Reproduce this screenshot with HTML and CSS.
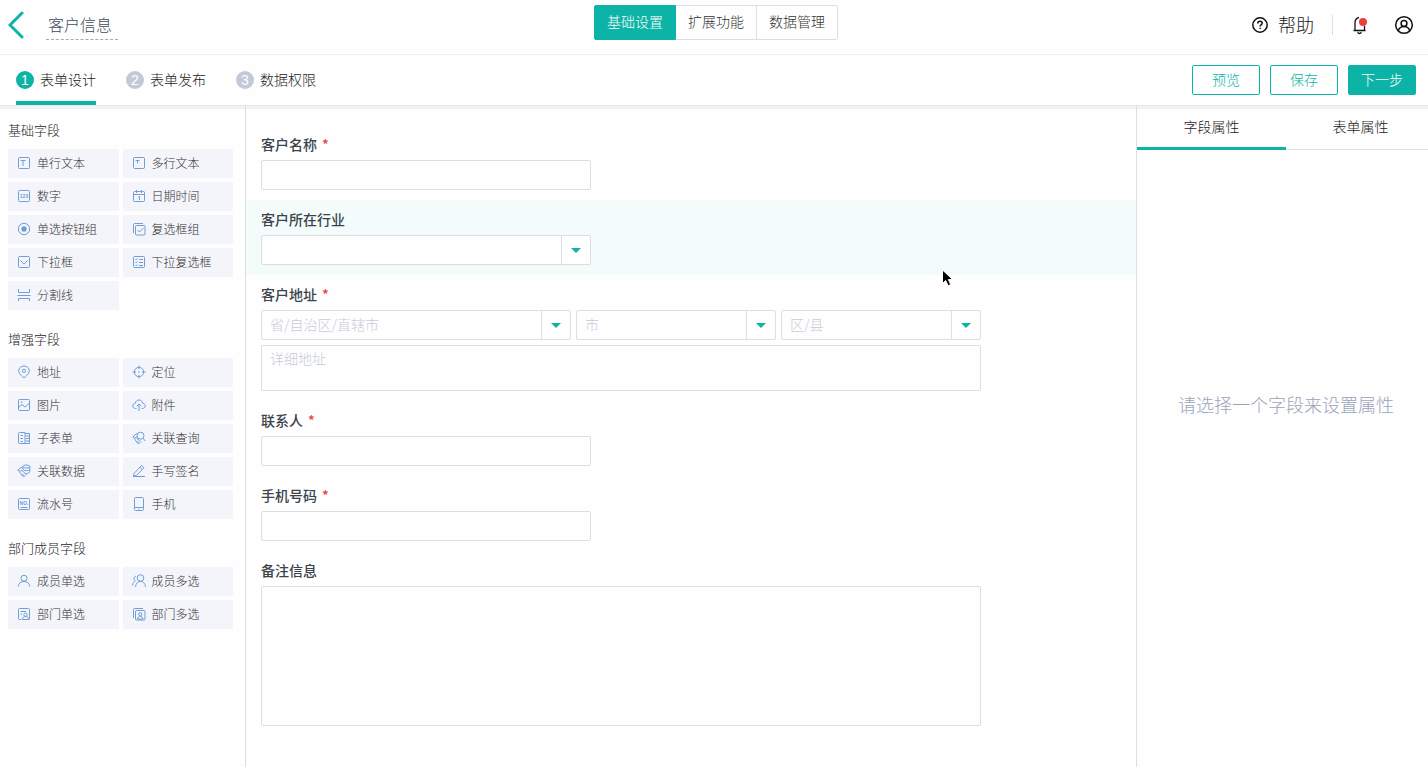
FILE: index.html
```html
<!DOCTYPE html>
<html lang="zh-CN">
<head>
  <meta charset="UTF-8" />
  <title>客户信息</title>
  <meta name="viewport" content="width=device-width, initial-scale=1.0" />
  <link rel="stylesheet" href="styles.css">
</head>
<body>
  <!-- Top bar -->
  <header class="topbar">
    <div class="topbar-left">
      <button class="icon-btn" type="button" aria-label="返回">
        <svg class="back-icon" width="16" height="28" viewBox="0 0 16 28"><path d="M14 2 2 14l12 12"/></svg>
      </button>
      <input class="form-name" type="text" value="客户信息" aria-label="表单名称">
    </div>

    <nav class="segments">
      <button class="segment active" type="button">基础设置</button>
      <button class="segment" type="button">扩展功能</button>
      <button class="segment" type="button">数据管理</button>
    </nav>

    <div class="topbar-right">
      <a class="help" href="#">
        <svg class="line-icon" width="18" height="18" viewBox="0 0 18 18"><circle cx="9" cy="9" r="7.200"/><path d="M6.800 7.400c0-1.400 1-2.100 2.200-2.100s2.200.8 2.200 2c0 1.500-2.100 1.500-2.100 3.100M9.100 11.700v1.400"/></svg>
        <span class="help-text">帮助</span>
      </a>
      <span class="divider"></span>
      <button class="icon-btn" type="button" aria-label="消息">
        <svg class="line-icon bell" width="18" height="20" viewBox="0 0 18 20"><path d="M8 2.500C5.600 3 4 5.200 4 8v7.200M2.500 15.500h12M13.500 11v4.200M6.500 17.300c.8.400 1.200 1.200 2 1.200s1.400-.8 2-1.200"/><circle class="dot" cx="12" cy="7" r="4"/></svg>
      </button>
      <button class="icon-btn" type="button" aria-label="账号">
        <svg class="line-icon" width="20" height="20" viewBox="0 0 20 20"><circle cx="10" cy="10" r="8.300"/><circle cx="10" cy="8.500" r="2.900"/><path d="M4.300 15.600c.9-2.600 3-4 5.700-4s4.800 1.400 5.700 4"/></svg>
      </button>
    </div>
  </header>

  <!-- Steps -->
  <div class="stepbar">
    <nav class="steps">
      <a class="step active" href="#"><span class="step-num">1</span><span class="step-text">表单设计</span></a>
      <a class="step" href="#"><span class="step-num">2</span><span class="step-text">表单发布</span></a>
      <a class="step" href="#"><span class="step-num">3</span><span class="step-text">数据权限</span></a>
    </nav>
    <div class="actions">
      <button class="btn" type="button">预览</button>
      <button class="btn" type="button">保存</button>
      <button class="btn btn-primary" type="button">下一步</button>
    </div>
  </div>

  <div class="workspace">
    <!-- Field palette -->
    <aside class="palette">
      <section class="group">
        <h2 class="group-title">基础字段</h2>
        <div class="widgets">
          <button class="widget" type="button">
            <svg viewBox="0 0 14 14"><rect x="1.500" y="1.500" width="11" height="11" rx="1"/><path d="M3.500 4.500h5M6 4.500v5.500"/></svg>单行文本
          </button>
          <button class="widget" type="button">
            <svg viewBox="0 0 14 14"><rect x="1.500" y="1.500" width="11" height="11" rx="1"/><path d="M3.500 4.500h4M5.500 4.500v3"/></svg>多行文本
          </button>
          <button class="widget" type="button">
            <svg viewBox="0 0 14 14"><rect x="1.500" y="1.500" width="11" height="11" rx="1"/><text x="7" y="9" font-size="5">123</text></svg>数字
          </button>
          <button class="widget" type="button">
            <svg viewBox="0 0 14 14"><rect x="1.500" y="2.500" width="11" height="10" rx="1"/><path d="M1.500 5.500h11M4.500 1v3M9.500 1v3M6.300 8 7.500 7.500v3.500"/></svg>日期时间
          </button>
          <button class="widget" type="button">
            <svg viewBox="0 0 14 14"><circle cx="7" cy="7" r="5.700"/><circle class="fill" cx="7" cy="7" r="2.700"/></svg>单选按钮组
          </button>
          <button class="widget" type="button">
            <svg viewBox="0 0 14 14"><rect x="3.500" y="3.500" width="9.500" height="9.500" rx="1"/><path d="M1.500 11V2.500q0-1 1-1H11M5.500 8l2 2 4-4"/></svg>复选框组
          </button>
          <button class="widget" type="button">
            <svg viewBox="0 0 14 14"><rect x="1.500" y="1.500" width="11" height="11" rx="1"/><path d="M3.500 5.500 7 9l3.500-3.500"/></svg>下拉框
          </button>
          <button class="widget" type="button">
            <svg viewBox="0 0 14 14"><rect x="1.500" y="1.500" width="11" height="11" rx="1"/><path d="M3.300 4l.8.800L5.500 3.500M3.300 7l.8.800L5.500 6.500M3.300 10l.8.800L5.500 9.500M7 4.500h4M7 7.500h4M7 10.500h4"/></svg>下拉复选框
          </button>
          <button class="widget" type="button">
            <svg viewBox="0 0 14 14"><path d="M1.500 1v3.500h11V1M.5 7.500h13M1.500 13v-2.500h11V13"/></svg>分割线
          </button>
        </div>
      </section>

      <section class="group">
        <h2 class="group-title">增强字段</h2>
        <div class="widgets">
          <button class="widget" type="button">
            <svg viewBox="0 0 14 14"><path d="M7 13C4 10.500 1.700 8.200 1.700 5.800 1.700 3 4 1 7 1s5.300 2 5.300 4.800C12.300 8.200 10 10.500 7 13z"/><circle cx="7" cy="5.800" r="1.600"/></svg>地址
          </button>
          <button class="widget" type="button">
            <svg viewBox="0 0 14 14"><circle cx="7" cy="7" r="4.700"/><path d="M7 .5v3.500M7 10v3.500M.5 7H4M10 7h3.500"/><circle class="fill" cx="7" cy="7" r=".8"/></svg>定位
          </button>
          <button class="widget" type="button">
            <svg viewBox="0 0 14 14"><rect x="1.500" y="1.500" width="11" height="11" rx="1"/><path d="M1.500 9.500 5 6.500l3 2.500 4.500-4"/><circle class="fill" cx="4.500" cy="4.300" r=".8"/></svg>图片
          </button>
          <button class="widget" type="button">
            <svg viewBox="0 0 14 14"><path d="M4.500 10.500h-1C1.900 10.500.7 9.400.7 8s1-2.500 2.500-2.600C3.500 3.300 5 2 7 2s3.500 1.300 3.800 3.400c1.500.1 2.500 1.200 2.500 2.600s-1.200 2.500-2.800 2.500h-1M7 13V6M4.800 8.200 7 6l2.200 2.200"/></svg>附件
          </button>
          <button class="widget" type="button">
            <svg viewBox="0 0 14 14"><path d="M8 1.500H2.500q-1 0-1 1v9q0 1 1 1H8zM8 2.500h4.500v10H8M3.500 4.500H6M3.500 7.500H6M3.500 10.500H6M9 5h3.500M9 7.500h3.500M9 10h3.500"/></svg>子表单
          </button>
          <button class="widget" type="button">
            <svg viewBox="0 0 14 14"><circle cx="8.500" cy="4.700" r="3.500"/><path d="m11 7.200 2.300 2.800M5.500 2.700 4 3 .8 6.200l1.400 1 2.600-1M4.500 7l4 3.700M2.300 7.500l3 4.500q1 1 2 .2M5.500 10.500l2 2M8.500 10.500l1 .8"/></svg>关联查询
          </button>
          <button class="widget" type="button">
            <svg viewBox="0 0 14 14"><ellipse cx="9.300" cy="2.500" rx="3.500" ry="1.500"/><path d="M5.800 2.500v2.700c1 2 6 2 7 0V2.500M12.800 5.200V8c-.6 1-2 1.500-3.500 1.500M5.500 4 4 3.500.8 6l1.400 1.200L5 6.500l4.500 4M2.300 7.500l3.200 4.500q1 1 2 .2M5.500 10l2.300 2.500M8.500 10.500l1 .8"/></svg>关联数据
          </button>
          <button class="widget" type="button">
            <svg viewBox="0 0 14 14"><path d="M2 9.500 9.500 1.500 12 3.700 4.500 11.500l-3 .5zM8 3.300l2.300 2.200M1 12.500h12"/></svg>手写签名
          </button>
          <button class="widget" type="button">
            <svg viewBox="0 0 14 14"><rect x="1.500" y="1.500" width="11" height="11" rx="1"/><text x="7" y="8" font-size="5">NO.</text><path d="M3.500 10.500h7"/></svg>流水号
          </button>
          <button class="widget" type="button">
            <svg viewBox="0 0 14 14"><rect x="2.500" y=".5" width="9" height="13" rx="1"/><path d="M2.500 10.500h9M6.500 12h1"/></svg>手机
          </button>
        </div>
      </section>

      <section class="group">
        <h2 class="group-title">部门成员字段</h2>
        <div class="widgets">
          <button class="widget" type="button">
            <svg viewBox="0 0 14 14"><circle cx="7" cy="4.200" r="3"/><path d="M1 12.500C1.600 9.300 4 7.400 7 7.400s5.400 1.900 6 5.100"/></svg>成员单选
          </button>
          <button class="widget" type="button">
            <svg viewBox="0 0 14 14"><circle cx="8.500" cy="4" r="3.300"/><path d="M3.500 12.800c.4-3.500 2.400-5.500 5-5.500s4.600 2 5 5.500M4 2.200C1.600 2.300 1.200 5.500 3.300 6.800 1.800 7.600.8 9 .6 11.500"/></svg>成员多选
          </button>
          <button class="widget" type="button">
            <svg viewBox="0 0 14 14"><path d="M4 12.500H2.500q-1 0-1-1v-9q0-1 1-1h9q1 0 1 1v9q0 1-1 1M3.500 4.500H9M3.500 7H5"/><circle cx="8.500" cy="7.700" r="1.700"/><path d="M5 12.500c.5-4 6.500-4 7 0z"/></svg>部门单选
          </button>
          <button class="widget" type="button">
            <svg viewBox="0 0 14 14"><rect x="3.500" y="3.500" width="9.500" height="9.500" rx="1"/><path d="M1.500 11V2.500q0-1 1-1H11M5.500 12c.4-3.600 5.100-3.600 5.500 0z"/><circle cx="8.300" cy="7.200" r="1.600"/></svg>部门多选
          </button>
        </div>
      </section>
    </aside>

    <!-- Form canvas -->
    <main class="canvas">
      <div class="field">
        <label class="field-label" for="name">客户名称<span class="required">*</span></label>
        <input class="control" id="name" type="text">
      </div>

      <div class="field hovered">
        <label class="field-label" for="industry">客户所在行业</label>
        <div class="select">
          <select id="industry"><option></option></select>
          <span class="arrow"></span>
        </div>
      </div>

      <div class="field">
        <label class="field-label" for="province">客户地址<span class="required">*</span></label>
        <div class="address">
          <div class="select province">
            <select id="province"><option>省/自治区/直辖市</option></select>
            <span class="arrow"></span>
          </div>
          <div class="select">
            <select aria-label="市"><option>市</option></select>
            <span class="arrow"></span>
          </div>
          <div class="select">
            <select aria-label="区/县"><option>区/县</option></select>
            <span class="arrow"></span>
          </div>
          <textarea class="control detail" placeholder="详细地址" aria-label="详细地址"></textarea>
        </div>
      </div>

      <div class="field">
        <label class="field-label" for="contact">联系人<span class="required">*</span></label>
        <input class="control" id="contact" type="text">
      </div>

      <div class="field">
        <label class="field-label" for="phone">手机号码<span class="required">*</span></label>
        <input class="control" id="phone" type="tel">
      </div>

      <div class="field">
        <label class="field-label" for="remark">备注信息</label>
        <textarea class="control remark" id="remark"></textarea>
      </div>
    </main>

    <!-- Properties -->
    <aside class="props">
      <div class="tabs">
        <button class="tab active" type="button">字段属性</button>
        <button class="tab" type="button">表单属性</button>
      </div>
      <p class="empty">请选择一个字段来设置属性</p>
    </aside>
  </div>

  <svg class="cursor" width="14" height="20" viewBox="0 0 14 20"><path d="M1.500 1v13.500l3.200-3 2.400 5.300 2.600-1.200-2.300-5h4.400z"/></svg>
</body>
</html>
```

FILE: styles.css
```css
:root {
  --green: #0db3a6;
  --line: #dcdee0;
  --text: #1c1c1c;
  --icon: #6f9ed8;
}

* {
  box-sizing: border-box;
}

body {
  margin: 0;
  height: 100vh;
  display: flex;
  flex-direction: column;
  overflow: hidden;
  background: #fefefe;
  color: var(--text);
  font-family: "Noto Sans CJK SC", sans-serif;
  font-size: 14px;
  font-weight: 300;
  line-height: 20px;
}

button, input, select, textarea {
  font: inherit;
  color: inherit;
}

button {
  padding: 0;
  border: 0;
  background: none;
  cursor: pointer;
}

a {
  color: inherit;
  text-decoration: none;
}

svg {
  display: block;
  flex: none;
  fill: none;
}

/* Top bar */
.topbar {
  display: grid;
  grid-template-columns: 1fr auto 1fr;
  height: 55px;
  padding: 0 12px 4px 8px;
  align-items: center;
  border-bottom: 1px solid #efefef;
}

.topbar-left {
  display: flex;
  align-items: center;
  gap: 22px;
}

.back-icon {
  stroke: var(--green);
  stroke-width: 3;
  stroke-linecap: round;
}

.form-name {
  width: 72px;
  height: 30px;
  padding: 0 2px 2px;
  border: 0;
  border-bottom: 1px dashed #aaa;
  background: none;
  color: #3e4a5a;
  font-size: 16px;
  outline: none;
}

.segments {
  display: flex;
  height: 35px;
  margin: 0 0 5px 8px;
}

.segment {
  padding: 0 12px 4px;
  border: 1px solid var(--line);
  color: #333;
}

.segment + .segment {
  border-left: 0;
}

.segment.active {
  border-color: var(--green);
  border-radius: 2px 0 0 2px;
  background: var(--green);
  color: #fff;
}

.segment:last-child {
  border-radius: 0 2px 2px 0;
}

.topbar-right {
  display: flex;
  align-items: center;
  justify-content: flex-end;
}

.help {
  display: flex;
  align-items: center;
  gap: 9px;
  font-size: 18px;
}

.help-text,
.step-text {
  padding-bottom: 2px;
}

.divider {
  width: 1px;
  height: 20px;
  margin: 0 18px;
  background: var(--line);
}

.topbar-right .icon-btn + .icon-btn {
  margin: 0 2px 0 25px;
}

.line-icon {
  stroke: #111;
  stroke-width: 1.5;
}

.bell {
  stroke-width: 1.3;
}

.dot {
  fill: #e8403c;
  stroke: none;
}

/* Steps */
.stepbar {
  display: flex;
  justify-content: space-between;
  height: 50px;
  padding: 0 12px 0 16px;
}

.steps {
  display: flex;
  gap: 30px;
}

.step {
  display: flex;
  align-items: center;
  gap: 6px;
  border-top: 4px solid transparent;
  border-bottom: 4px solid transparent;
}

.step.active {
  border-bottom-color: var(--green);
}

.step-num {
  width: 18px;
  height: 18px;
  border-radius: 50%;
  background: #c2cad8;
  color: #fff;
  font-family: "Liberation Sans", sans-serif;
  line-height: 18px;
  text-align: center;
}

.step.active .step-num {
  background: var(--green);
}

.actions {
  display: flex;
  align-items: center;
  gap: 10px;
}

.btn {
  width: 68px;
  height: 30px;
  padding-bottom: 2px;
  border: 1px solid var(--green);
  border-radius: 2px;
  color: var(--green);
}

.btn-primary {
  background: var(--green);
  color: #fff;
}

/* Workspace */
.workspace {
  flex: 1;
  display: flex;
  min-height: 0;
  /* the property panel runs slightly past the window edge */
  margin-right: -7px;
  box-shadow: inset 0 1px #e8e8e8, inset 0 4px #f2f2f2;
}

.palette {
  flex: 0 0 246px;
  padding: 15px 12px 0 8px;
  border-right: 1px solid var(--line);
}

.group {
  margin-bottom: 19px;
}

.group-title {
  margin: 0 0 9px;
  font-size: 13px;
  font-weight: 300;
}

.widgets {
  display: grid;
  grid-template-columns: 1fr 1fr;
  gap: 4px;
}

.widget {
  display: flex;
  align-items: center;
  gap: 6px;
  height: 29px;
  padding: 0 0 1px 9px;
  background: #f3f5fb;
  color: #333;
  font-size: 12px;
}

.widget svg {
  width: 14px;
  height: 14px;
  stroke: var(--icon);
}

.widget svg text {
  fill: var(--icon);
  stroke: none;
  font-family: "Liberation Sans", sans-serif;
  font-weight: 700;
  text-anchor: middle;
}

.widget svg .fill {
  fill: var(--icon);
  stroke: none;
}

.canvas {
  flex: 1;
  padding-top: 20px;
}

.field {
  padding: 10px 15px;
}

.field.hovered {
  background: #f3fcfb;
}

.field-label {
  display: block;
  margin-bottom: 7px;
  color: #3a434c;
  font-weight: 500;
  line-height: 18px;
}

.required {
  margin-left: 5px;
  color: #e64340;
}

.control, .select {
  display: flex;
  width: 330px;
  height: 30px;
  border: 1px solid var(--line);
  border-radius: 2px;
  background: #fefefe;
}

.control {
  padding: 2px 8px;
  outline: none;
  resize: none;
}

.control::placeholder {
  color: #c8ccd8;
}

.select select {
  flex: 1;
  min-width: 0;
  padding: 0 8px 2px;
  border: 0;
  background: none;
  outline: none;
  appearance: none;
}

.arrow {
  display: grid;
  place-items: center;
  width: 29px;
  border-left: 1px solid var(--line);
}

.arrow::after {
  content: "";
  border: 5px solid transparent;
  border-top-color: var(--green);
  border-bottom: 0;
}

.address {
  display: flex;
  flex-wrap: wrap;
  gap: 5px;
  width: 720px;
  max-width: 100%;
}

.address .select {
  width: 200px;
  color: #c8ccd8;
}

.address .province {
  width: 310px;
}

.address .detail {
  width: 100%;
  height: 46px;
}

.remark {
  width: 720px;
  max-width: 100%;
  height: 140px;
}

/* Properties */
.props {
  flex: 0 0 299px;
  border-left: 1px solid var(--line);
}

.tabs {
  display: flex;
  height: 45px;
}

.tab {
  flex: 1;
  padding-bottom: 2px;
  border-bottom: 1px solid var(--line);
}

.tab.active {
  padding-bottom: 0;
  border-bottom: 3px solid var(--green);
}

.empty {
  margin: 0;
  padding-top: 244px;
  color: #9aa4b8;
  font-size: 18px;
  text-align: center;
}

.cursor {
  position: absolute;
  left: 941px;
  top: 269px;
  fill: #000;
  stroke: #fff;
  pointer-events: none;
}
```
